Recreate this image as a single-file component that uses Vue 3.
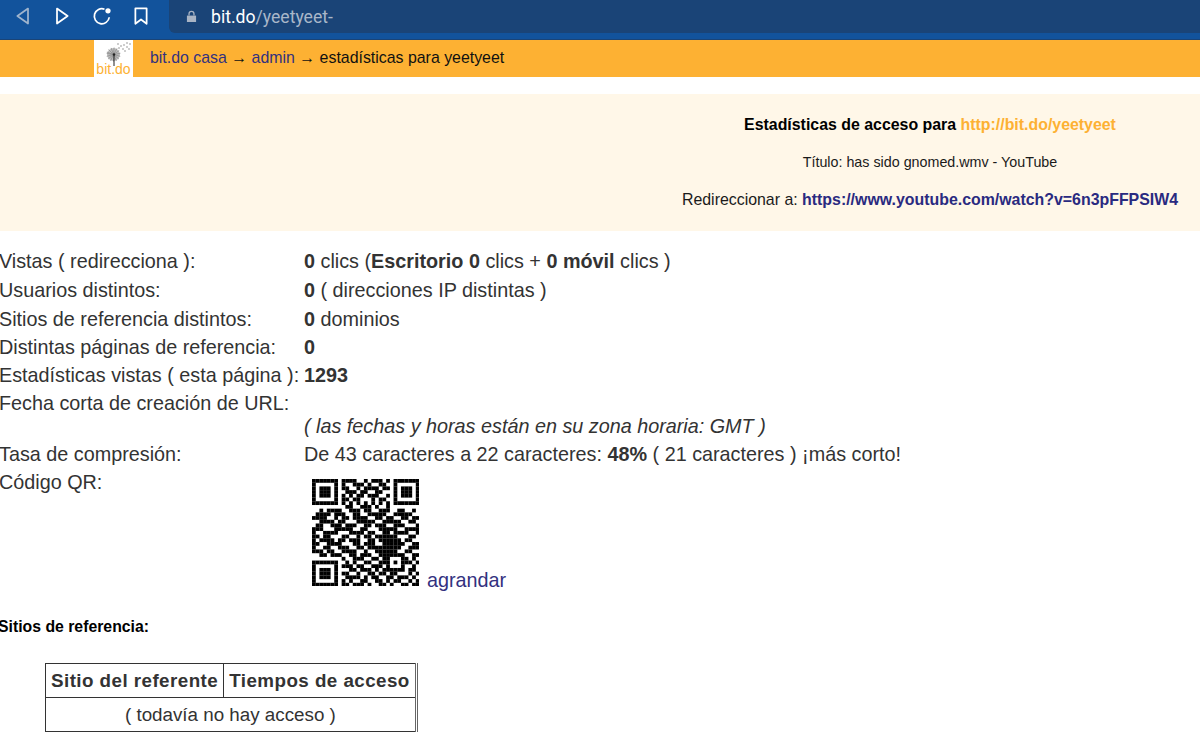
<script setup>
const rows = [
  { label: 'Vistas ( redirecciona ):', html: '<b>0</b> clics (<b>Escritorio 0</b> clics + <b>0 móvil</b> clics )', h: 29 },
  { label: 'Usuarios distintos:', html: '<b>0</b> ( direcciones IP distintas )', h: 29 },
  { label: 'Sitios de referencia distintos:', html: '<b>0</b> dominios', h: 28 },
  { label: 'Distintas páginas de referencia:', html: '<b>0</b>', h: 28 },
  { label: 'Estadísticas vistas ( esta página ):', html: '<b>1293</b>', h: 28 }
]
const qr = [
  '11111110111100101110101111111',
  '10000010100111010011001000001',
  '10111010110010111101101011101',
  '10111010011101100110001011101',
  '10111010101011011100101011101',
  '10000010110110001011001000001',
  '11111110101010101010101111111',
  '00000000011001110100100000000',
  '00101111001110110011100110010',
  '01111011100110011111001111100',
  '11110010110111100110110011011',
  '00111101100011111001111100110',
  '01100111011100110111001110001',
  '11100011111001100011111001111',
  '10011110001111011001101111001',
  '11011000110010110111111000110',
  '10111101101110011011111101100',
  '11001111000110111001111110011',
  '10011001110011011111111100111',
  '11101100111100100111111001100',
  '00110111001101110011111110011',
  '00000000100111001101100011010',
  '11111110010100110011101011101',
  '10000010111011001110100010010',
  '10111010001101110101111110110',
  '10111010110010011011011000101',
  '10111010011110101100110111010',
  '10000010101001100110101100101',
  '11111110110111010011010011011'
]
const cells = []
qr.forEach((r, y) => {
  for (let x = 0; x < r.length; x++) if (r[x] === '1') cells.push({ x, y })
})
const seeds = [
  [33, 3], [36, 4], [30, 5], [27, 6], [33, 7], [29, 9], [25, 8], [35, 9], [31, 11], [24, 4]
]
const rays = [-70, -45, -20, 5, 30, 55, 80, 105, 130, 155, 180, 205, 230, 255, 280]
</script>

<template>
  <div class="page">
    <header class="chrome">
      <nav class="nav">
        <svg class="ico" viewBox="0 0 16 16"><path class="dim" d="M12 2 L3.5 8 L12 14 Z" /></svg>
        <svg class="ico" viewBox="0 0 16 16"><path class="lit" d="M4 2 L12.5 8 L4 14 Z" /></svg>
        <svg class="ico" viewBox="0 0 16 16"><path class="lit" d="M13.8 9 A6 6 0 1 1 10 2.6" /><circle cx="12.8" cy="3.8" r="2.1" fill="#fff" /></svg>
        <svg class="ico" viewBox="0 0 16 16"><path class="lit" d="M3.5 1.8 H12.5 V14.2 L8 10.8 L3.5 14.2 Z" /></svg>
      </nav>
      <div class="address">
        <svg class="lock" viewBox="0 0 12 14"><path d="M1 6 H11 V13 H1 Z" fill="#a9b4c4" /><path d="M3.3 6 V4 A2.7 2.7 0 0 1 8.7 4 V6" fill="none" stroke="#a9b4c4" stroke-width="1.4" /></svg>
        <span class="url"><span class="host">bit.do</span>/yeetyeet-</span>
      </div>
    </header>

    <div class="orange">
      <div class="logo">
        <svg class="flower" viewBox="0 0 39 26">
          <g stroke="#8a8a8a" stroke-width="0.7">
            <line v-for="a in rays" :key="a" x1="19.5" y1="14.5" x2="19.5" y2="7.5" :transform="`rotate(${a} 19.5 14.5)`" />
          </g>
          <circle cx="19.5" cy="14.5" r="6.5" fill="#8f8f8f" fill-opacity="0.6" />
          <line x1="20" y1="14.5" x2="20" y2="26" stroke="#222" stroke-width="1" />
          <circle cx="20" cy="14.5" r="1.2" fill="#222" />
          <circle v-for="(s, i) in seeds" :key="i" :cx="s[0]" :cy="s[1]" r="0.7" fill="#777" />
        </svg>
        <span class="logo-text">bit<span class="stem">.</span>do</span>
      </div>
      <div class="crumbs">
        <a>bit.do casa</a> → <a>admin</a> → estadísticas para yeetyeet
      </div>
    </div>

    <section class="banner">
      <div class="banner-inner">
        <p class="b1"><b>Estadísticas de acceso para <span class="amber">http://bit.do/yeetyeet</span></b></p>
        <p class="b2">Título: has sido gnomed.wmv - YouTube</p>
        <p class="b3">Redireccionar a: <b class="navy">https://www.youtube.com/watch?v=6n3pFFPSIW4</b></p>
      </div>
    </section>

    <section class="stats">
      <div v-for="r in rows" :key="r.label" class="row" :style="{ height: r.h + 'px' }">
        <div class="lab">{{ r.label }}</div>
        <div class="val" v-html="r.html"></div>
      </div>
      <div class="row date">
        <div class="lab">Fecha corta de creación de URL:</div>
        <div class="val note">( las fechas y horas están en su zona horaria: GMT )</div>
      </div>
      <div class="row rate">
        <div class="lab">Tasa de compresión:</div>
        <div class="val">De 43 caracteres a 22 caracteres: <b>48%</b> ( 21 caracteres ) ¡más corto!</div>
      </div>
      <div class="row qrrow">
        <div class="lab">Código QR:</div>
        <div class="val qrval">
          <svg class="qr" viewBox="0 0 29 29">
            <rect v-for="c in cells" :key="c.x + '-' + c.y" :x="c.x" :y="c.y" width="1.02" height="1.02" fill="#000" />
          </svg>
          <a class="enlarge">agrandar</a>
        </div>
      </div>
    </section>

    <h4 class="ref">Sitios de referencia:</h4>

    <table class="tbl">
      <thead>
        <tr><th>Sitio del referente</th><th>Tiempos de acceso</th></tr>
      </thead>
      <tbody>
        <tr><td colspan="2">( todavía no hay acceso )</td></tr>
      </tbody>
    </table>
  </div>
</template>

<style>
html, body { margin: 0; background: #fff; }
</style>

<style scoped>
.page {
  width: 1200px;
  height: 741px;
  overflow: hidden;
  font-family: "Liberation Sans", Arial, sans-serif;
  color: #333;
  background: #fff;
}
.chrome {
  height: 39px;
  background: #12539c;
  border-bottom: 1px solid #1a4477;
  display: flex;
  align-items: stretch;
}
.nav {
  width: 169px;
  flex: none;
  display: flex;
  gap: 19.5px;
  padding: 6px 0 0 12.5px;
  box-sizing: border-box;
}
.ico { width: 20px; height: 20px; }
.dim { fill: none; stroke: #9fb4cd; stroke-width: 1.4; stroke-linejoin: round; }
.lit { fill: none; stroke: #fff; stroke-width: 1.4; stroke-linejoin: round; }
.address {
  flex: 1;
  height: 33px;
  background: #1a4477;
  border-bottom-left-radius: 6px;
  display: flex;
  align-items: center;
  padding-left: 17px;
  gap: 14px;
}
.lock { width: 11px; height: 13px; }
.url { font-family: Roboto, "Liberation Sans", sans-serif; font-size: 17.6px; color: #a9b7c9; }
.host { color: #fff; }
.orange {
  height: 37px;
  background: #fdb133;
  display: flex;
  padding-left: 94px;
}
.logo {
  width: 39px;
  height: 37px;
  background: #fff;
  position: relative;
  flex: none;
}
.flower { position: absolute; left: 0; top: 0; width: 39px; height: 26px; }
.logo-text {
  position: absolute;
  left: 0;
  right: 0;
  bottom: 0;
  text-align: center;
  font-size: 14px;
  line-height: 15px;
  color: #fdb133;
}
.crumbs {
  margin-left: 17px;
  font-size: 15.9px;
  line-height: 36px;
  color: #111;
  white-space: nowrap;
}
.crumbs a { color: #33317f; }
.banner {
  margin-top: 17px;
  height: 137px;
  background: #fff7e8;
  display: flex;
  justify-content: flex-end;
}
.banner-inner { width: 540px; text-align: center; color: #1a1a1a; }
.banner p { margin: 0; white-space: nowrap; }
.b1 { font-size: 15.9px; line-height: 18px; padding-top: 22px; color: #000; }
.amber { color: #fdb133; }
.b2 { font-size: 14.3px; line-height: 16px; padding-top: 20px; }
.b3 { font-size: 15.9px; line-height: 18px; padding-top: 21px; }
.navy { color: #2a2a80; }
.stats { margin-top: 16px; font-size: 19.8px; color: #333; }
.row { display: flex; align-items: flex-start; line-height: 28px; }
.lab { width: 304px; flex: none; margin-left: -1px; padding-right: 1px; white-space: nowrap; }
.val { white-space: nowrap; }
.date { height: 51px; }
.date .note { font-style: italic; padding-top: 23px; }
.rate { height: 28px; }
.qrrow { height: 122px; }
.qrval { display: flex; align-items: flex-end; padding-top: 10.5px; }
.qr { width: 107.5px; height: 107.5px; margin-left: 7.5px; flex: none; filter: blur(0.3px); }
.enlarge { color: #33317f; margin-left: 8px; position: relative; top: 8px; }
.ref { margin: 28px 0 0 -2px; font-size: 15.8px; line-height: 18px; font-weight: bold; color: #000; }
.tbl {
  margin: 27px 0 0 45px;
  border-collapse: collapse;
  border: 1px solid #333;
  border-right: 3px double #666;
  font-size: 18.8px;
  color: #333;
}
.tbl th, .tbl td { border: 1px solid #333; padding: 0 5px; height: 33px; line-height: 33px; white-space: nowrap; }
.tbl th { letter-spacing: 0.45px; }
.tbl td { text-align: center; }
</style>
